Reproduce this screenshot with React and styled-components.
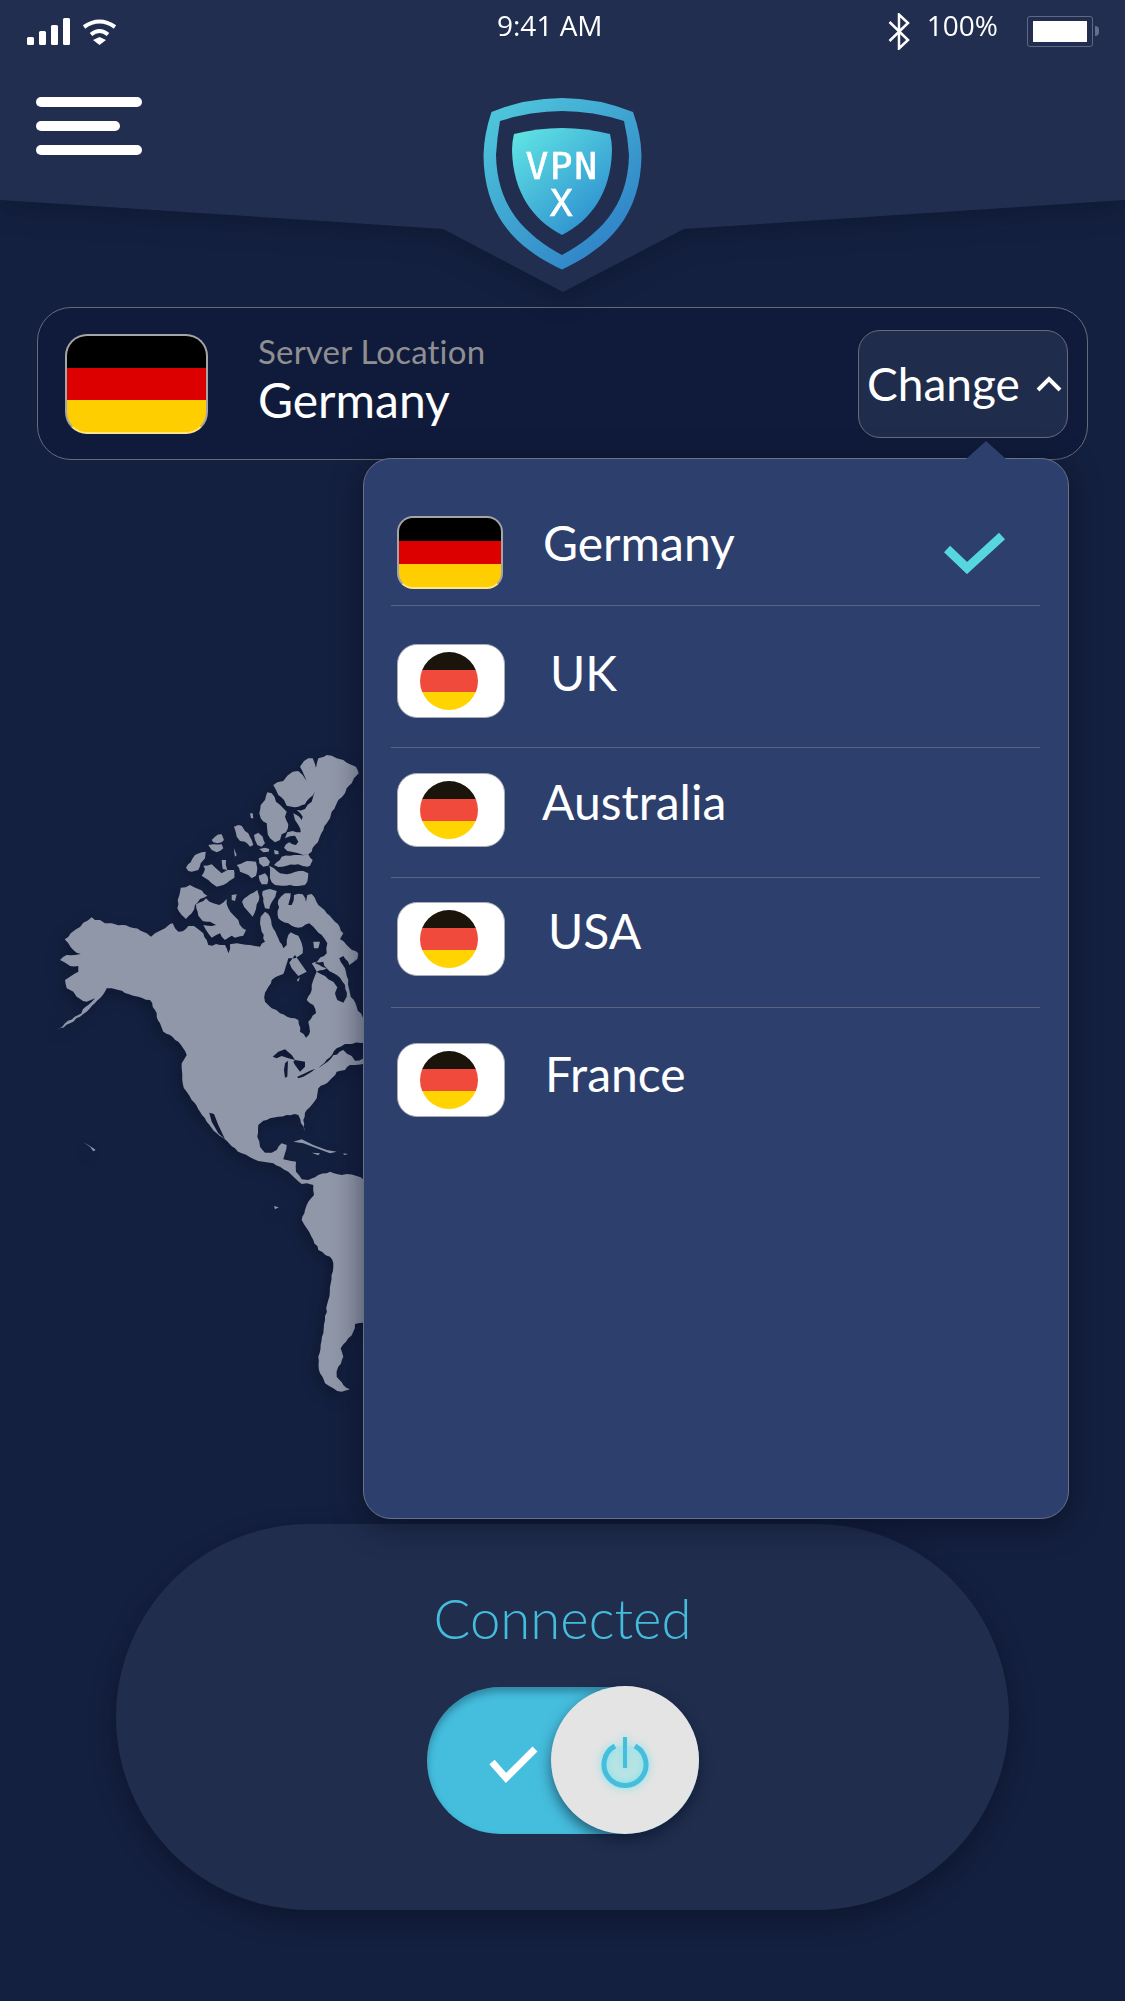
import React from 'react'
import styled, { createGlobalStyle } from 'styled-components'

const GlobalStyle = createGlobalStyle`
    html, body {
        margin: 0;
        padding: 0;
        background: #14203f;
    }
    * {
        box-sizing: border-box;
    }
`

// map tracing, done in three crops of the screenshot. each crop has its own origin
const Z7 = [170, 745]
const Z8 = [50, 900]
const Z9 = [170, 1100]

const seg = (origin, text) =>
    text.trim().split(/\s+/).map((p) => {
        const [x, y] = p.split(',').map(Number)
        return [origin[0] + x / 3, origin[1] + y / 3]
    })

// the tracing is too straight for a coastline, so break each long edge up a little
const rough = (points, amount) => {
    const out = []
    points.forEach((p, i) => {
        const q = points[(i + 1) % points.length]
        const dx = q[0] - p[0]
        const dy = q[1] - p[1]
        const len = Math.hypot(dx, dy)
        const steps = Math.min(6, Math.floor(len / 3.5))
        out.push(p)
        for (let s = 1; s < steps; s++) {
            const t = s / steps
            const wobble = Math.sin((p[0] + s) * 12.9898 + (p[1] + s) * 78.233) * 43758.5453
            const d = (wobble - Math.floor(wobble) - 0.5) * amount * 2
            out.push([p[0] + dx * t - (dy / len) * d, p[1] + dy * t + (dx / len) * d])
        }
    })
    return out
}

const shape = (points) =>
    'M' + points.map((p) => p[0].toFixed(1) + ' ' + p[1].toFixed(1)).join('L') + 'Z'

const mainland = [
    ...seg(Z8, `44,118 62,100 78,88 100,68 125,52 135,60 150,60 165,70 185,70 205,76 228,76 250,84 272,92 290,100
        303,110 315,100 330,92 345,85 360,72 368,70 375,85 385,95 398,94 415,78 432,78 445,88 460,100 470,120 475,135`),
    ...seg(Z7, `115,600 150,600 165,600 175,625 180,598 200,595 240,600 270,605 285,590 275,560 270,535 272,515
        285,500 300,515 305,540 325,580 340,610 350,600 355,570 362,562 385,572 395,595 398,625 375,640 355,640 345,665`),
    ...seg(Z8, `712,190 700,222 665,240 645,278 645,305 665,325 690,340 745,360 750,395 768,413 780,395 775,365
        798,340 790,315 770,300 785,270 790,240 800,215 825,228 850,245 862,262 855,280 862,300 880,308 890,290
        885,255 860,225 830,205 795,190 830,160 832,130 815,105 790,80 778,70`),
    ...seg(Z7, `385,548 355,535 325,520 325,465 345,445 362,445 355,480 365,480 372,450 398,448 408,470 412,450 425,447
        445,480 470,505 495,530 520,565 510,582 530,600 565,625 555,650`),
    ...seg(Z8, `925,165 912,185 898,195 880,168 868,175 885,205 895,240 900,280 920,320 938,352 990,352 990,425
        905,432 885,432 860,445 840,472 805,505 815,497 850,466 880,450 905,468 915,482 990,470 990,482 900,495
        885,510 860,515 840,540 805,565 800,595 770,630 760,660`),
    ...seg(Z9, `405,95 393,70 385,45 350,45 325,50 300,55 280,62 265,75 262,110 270,140 285,158 305,158 320,150
        335,130 350,135 345,160 340,178 360,182 378,185 378,215 395,238 415,240 435,232 445,225 470,220 480,215
        500,222 530,222 560,228 582,240 640,240 640,668 582,668 555,672 550,695 535,715 512,745 520,770 505,800
        500,830 520,855 540,868 515,875 490,865 465,850 450,820 445,770 460,700 465,660 475,600 482,550 490,490
        480,470 445,450 430,420 410,385 395,360 405,330 415,305 432,285 430,255 410,250 395,252 375,235 355,215
        330,200 310,190 280,185 265,183 240,172 215,160 195,145 170,122 140,100 110,65 90,35 65,0`),
    ...seg(Z8, `410,575 398,550 395,490 410,465 385,425 360,405 340,395 330,370 315,330 300,300 265,290 235,282
        205,270 185,265 170,265 150,295 120,325 90,350 60,370 20,392 45,370 85,345 115,315 135,295 110,305 80,290
        70,275 50,265 45,240 60,230 85,215 85,198 60,198 30,180 50,165 75,165 92,162 70,150 55,130`),
]

const arctic = [
    `310,120 322,112 340,108 352,92 368,80 385,78 398,90 410,108 400,85 390,65 402,48 415,40 428,40 438,68 445,40
     462,35 470,30 485,32 500,40 520,45 540,58 558,65 566,85 552,100 545,115 530,130 525,145 505,165 498,180 485,200
     480,220 470,235 460,255 448,280 435,300 425,320 415,328 400,330 385,325 365,320 352,318 342,308 348,298 358,292
     378,300 385,290 375,272 345,280 352,262 368,258 392,262 385,240 375,225 370,205 395,225 398,215 380,195 405,192
     425,170 435,140 418,160 405,178 385,185 350,182 342,165 325,150 318,135`,
    `272,180 285,165 292,142 305,145 318,170 340,190 350,200 345,215 355,238 348,262 335,268 330,285 315,292 300,280
     292,255 290,235 272,220 268,205`,
    `240,205 248,205 250,220 243,220`,
    `192,245 205,240 215,242 225,258 235,265 245,285 250,300 240,305 225,290 210,288 200,275`,
    `252,270 265,263 278,275 285,295 275,305 262,300 255,285`,
    `268,312 285,308 298,312 296,320 280,322`,
    `312,315 325,318 326,328 314,328`,
    `125,285 135,275 155,268 162,285 155,292 130,292`,
    `115,300 130,298 155,298 160,310 140,322 125,315`,
    `48,368 62,352 75,330 95,322 107,320 105,340 92,355 85,375 65,380 55,378`,
    `95,392 105,372 100,362 125,358 140,372 155,385 172,375 192,375 193,398 178,408 160,420 140,425 125,415 115,405`,
    `155,345 168,345 172,375 158,372`,
    `192,310 200,330 195,335`,
    `200,360 225,350 232,348 258,350 262,370 258,392 245,400 235,390 222,385 210,380`,
    `266,340 288,335 300,350 295,362 280,365 268,355`,
    `320,352 335,335 360,332 385,330 415,328 428,345 420,362 412,365 385,358 350,362 325,366 312,360`,
    `298,362 312,370 330,385 350,388 400,378 415,385 412,410 405,420 385,423 360,420 335,422 315,420 305,412 300,385`,
    `266,392 285,385 295,405 292,418 275,418`,
    `278,438 300,432 320,438 316,455 305,472 298,492 285,490 280,470`,
    `240,448 262,435 268,455 260,478 258,492 248,515 235,500 222,485 216,470`,
    `78,478 90,472 108,460 130,475 148,480 170,462 175,490 190,510 205,525 218,550 228,555 220,572 195,578 185,572
     165,585 150,565 125,578 108,555 100,540 138,540 120,530 98,528 85,512`,
    `32,428 60,420 85,432 112,452 90,462 75,480 65,505 48,522 35,510 22,490`,
    `185,450 200,448 195,468 185,465`,
    `430,590 450,590 445,610 432,610`,
    `425,655 460,650 470,670 440,680`,
].map((text) => seg(Z7, text))

const others = [
    // southampton and a bit of hudson bay
    seg(Z8, `718,188 735,165 770,215 745,228 725,205`),
    seg(Z8, `740,240 750,232 745,245`),
    // great lakes
    seg(Z8, `668,470 685,455 705,448 725,465 735,480 715,475 695,468 680,475`),
    seg(Z8, `705,490 714,482 712,530 705,533 702,510`),
    seg(Z8, `735,480 765,485 765,500 750,515 735,495 730,485`),
    seg(Z8, `742,530 765,520 780,512 795,507 785,515 760,530 745,535`),
    // gulf of california
    seg(Z9, `118,38 132,42 145,75 165,118 145,100 125,65`),
    // caribbean, hawaii, galapagos
    seg(Z9, `370,125 395,118 430,135 470,150 500,155 480,160 440,145 400,130`),
    seg(Z9, `425,158 450,160 445,166`),
    seg(Z9, `520,160 535,162 522,165`),
    seg(Z8, `100,727 115,735 130,745 137,750 130,754 120,740`),
    seg(Z9, `312,318 326,322 315,328`),
]

const mapPath =
    shape(rough(mainland, 1)) +
    arctic.map((a) => shape(rough(a, 1))).join('') +
    others.map(shape).join('')

const countries = [
    { name: 'UK', top: 38, bottom: 29, indent: 45, lift: 17 },
    { name: 'Australia', top: 25, bottom: 30, indent: 37, lift: 17 },
    { name: 'USA', top: 24, bottom: 31, indent: 43, lift: 17 },
    { name: 'France', top: 35, bottom: 0, indent: 40, lift: 13, last: true },
]

function App() {
    return (
        <Screen>
            <GlobalStyle />
            <HeaderShadow>
                <Header>
                    <StatusBar>
                        <StatusLeft>
                            <Signal>
                                <SignalBar $h={8} />
                                <SignalBar $h={14} />
                                <SignalBar $h={20} />
                                <SignalBar $h={27} />
                            </Signal>
                            <svg width="35" height="27" viewBox="0 0 35 27">
                                <path d="M2 9Q17.5-2 33 9M9 16.500Q17.500 9.500 26 16.500" fill="none" stroke="#fff" strokeWidth="4" />
                                <path d="M11 22L17.500 19 24 22 17.500 27Z" fill="#fff" />
                            </svg>
                        </StatusLeft>
                        <StatusText>9:41 AM</StatusText>
                        <StatusRight>
                            <svg width="22" height="37" viewBox="0 0 22 37">
                                <path d="M1.500 9L20 27 11 35.500V1.500L20 10 1.500 28" fill="none" stroke="#fff" strokeWidth="2.500" />
                            </svg>
                            <StatusText>100%</StatusText>
                            <Battery>
                                <BatteryFill />
                            </Battery>
                        </StatusRight>
                    </StatusBar>
                    <NavRow>
                        <Hamburger>
                            <HamburgerLine />
                            <HamburgerLine $short />
                            <HamburgerLine />
                        </Hamburger>
                        <LogoWrap>
                            <svg width="159" height="172" viewBox="0 0 159 172">
                                <defs>
                                    <linearGradient id="ring" x1="0.1" y1="0" x2="0.85" y2="0.9">
                                        <stop offset="0" stopColor="#50c8dc" />
                                        <stop offset="1" stopColor="#2e80c6" />
                                    </linearGradient>
                                    <linearGradient id="core" x1="0.1" y1="0" x2="0.85" y2="0.9">
                                        <stop offset="0" stopColor="#5fe3e3" />
                                        <stop offset="1" stopColor="#2e8fd0" />
                                    </linearGradient>
                                </defs>
                                <path
                                    fillRule="evenodd"
                                    fill="url(#ring)"
                                    d="M8.500 14Q43 0 79 0T150 14Q158 36 158.500 57C158 118 125 150 79 171.500C33 150 1 118 0.500 57Q1 36 8.500 14Z
                                       M17 23Q48 13 79 13T141 23Q145 40 146 57C145 110 115 137 79 157C43 137 14 110 13 57Q14 40 17 23Z"
                                />
                                <path
                                    fill="url(#core)"
                                    d="M31 36Q55 30 79 30T127 36Q129 44 129 52C128 95 108 122 79 137C50 122 30 95 29 52Q29 44 31 36Z"
                                />
                                <LogoText>
                                    <tspan x="79" y="81">VPN</tspan>
                                    <tspan x="79" y="118">X</tspan>
                                </LogoText>
                            </svg>
                        </LogoWrap>
                    </NavRow>
                </Header>
            </HeaderShadow>

            <LocationCard>
                <SquareFlag $w={143} $h={100} $radius={22} />
                <LocationText>
                    <LocationLabel>Server Location</LocationLabel>
                    <LocationName>Germany</LocationName>
                </LocationText>
                <ChangeButton>
                    Change
                    <svg width="26" height="16" viewBox="0 0 26 16">
                        <path d="M2 14L13 3 24 14" fill="none" stroke="#fff" strokeWidth="4" />
                    </svg>
                </ChangeButton>
            </LocationCard>

            <Body>
                <MapWrap>
                    <svg width="340" height="670" viewBox="40 740 340 670">
                        <path d={mapPath} fill="#9097a9" fillRule="evenodd" />
                    </svg>
                </MapWrap>

                <Dropdown>
                    <Row $top={57} $bottom={16}>
                        <SquareFlag $w={106} $h={73} $radius={16} />
                        <RowLabel $indent={40} $lift={19}>Germany</RowLabel>
                        <RowCheck width="62" height="42" viewBox="0 0 62 42">
                            <path d="M3 17L23 36 58 4" fill="none" stroke="#56d6e0" strokeWidth="9" />
                        </RowCheck>
                    </Row>
                    {countries.map((c) => (
                        <Row key={c.name} $top={c.top} $bottom={c.bottom} $last={c.last}>
                            <Tile>
                                <RoundFlag />
                            </Tile>
                            <RowLabel $indent={c.indent} $lift={c.lift}>{c.name}</RowLabel>
                        </Row>
                    ))}
                </Dropdown>

                <StatusPill>
                    <Connected>Connected</Connected>
                    <Toggle>
                        <ToggleCheck width="52" height="40" viewBox="0 0 52 40">
                            <path d="M4 17L18 33 47 4" fill="none" stroke="#fff" strokeWidth="7" />
                        </ToggleCheck>
                        <Knob>
                            <PowerIcon width="50" height="54" viewBox="0 0 50 54">
                                <path d="M15 11A21 21 0 1 0 35 11" fill="rgba(95,225,230,.18)" stroke="#45bddd" strokeWidth="5" />
                                <path d="M25 2V33" fill="none" stroke="#45bddd" strokeWidth="4" />
                            </PowerIcon>
                        </Knob>
                    </Toggle>
                </StatusPill>
            </Body>
        </Screen>
    )
}

export default App

const Screen = styled.div`
    width: 1125px;
    height: 2001px;
    overflow: hidden;
    background: #14203f;
    font-family: Lato, "Open Sans", sans-serif;
    color: #fff;
`
const HeaderShadow = styled.div`
    filter: drop-shadow(0 5px 14px rgba(6, 12, 32, 0.4));
`
const Header = styled.header`
    height: 292px;
    background: #212e4f;
    clip-path: polygon(0 0, 100% 0, 100% 200px, 684px 229px, 563px 292px, 443px 229px, 0 200px);
`
const StatusBar = styled.div`
    height: 62px;
    padding: 0 27px;
    display: grid;
    grid-template-columns: 470px auto 1fr;
    align-items: center;
`
const StatusLeft = styled.div`
    display: flex;
    align-items: flex-end;
    gap: 12px;
    height: 28px;
`
const Signal = styled.div`
    display: flex;
    align-items: flex-end;
    gap: 5px;
`
const SignalBar = styled.span`
    width: 7px;
    height: ${(p) => p.$h}px;
    background: #fff;
    border-radius: 1.5px;
`
const StatusText = styled.span`
    font-family: "Open Sans", sans-serif;
    font-size: 28px;
    font-weight: 400;
    line-height: 34px;
    margin-top: -12px;
    white-space: nowrap;
`
const StatusRight = styled.div`
    display: flex;
    align-items: center;
    justify-content: flex-end;
    gap: 17px;
`
const Battery = styled.div`
    position: relative;
    width: 66px;
    height: 31px;
    margin-left: 12px;
    margin-right: 5px;
    padding: 4px 5px;
    border: 1.5px solid #5f6a82;
    border-radius: 3px;
    &::after {
        content: '';
        position: absolute;
        top: 9px;
        right: -7px;
        width: 4px;
        height: 10px;
        border-radius: 0 4px 4px 0;
        background: #666f88;
    }
`
const BatteryFill = styled.div`
    height: 100%;
    background: #fff;
`
const NavRow = styled.div`
    padding: 35px 36px 0;
    display: grid;
    grid-template-columns: 106px 1fr 106px;
    align-items: start;
`
const Hamburger = styled.div`
    display: flex;
    flex-direction: column;
    gap: 14px;
`
const HamburgerLine = styled.span`
    display: block;
    height: 10px;
    width: ${(p) => (p.$short ? '84px' : '106px')};
    background: #fff;
    border-radius: 5px;
`
const LogoWrap = styled.div`
    display: flex;
    justify-content: center;
    padding-top: 1px;
    svg {
        display: block;
    }
`
const LogoText = styled.text`
    font-family: "DejaVu Sans Mono", monospace;
    font-size: 38px;
    text-anchor: middle;
    letter-spacing: 1.5px;
    fill: #fff;
    stroke: #fff;
    stroke-width: 0.6px;
`
const LocationCard = styled.section`
    height: 153px;
    margin: 15px 37px 0;
    padding: 0 19px 0 27px;
    display: flex;
    align-items: center;
    background: #101b3b;
    border: 1px solid #666b78;
    border-radius: 34px;
`
const SquareFlag = styled.div`
    flex: none;
    width: ${(p) => p.$w}px;
    height: ${(p) => p.$h}px;
    border-radius: ${(p) => p.$radius}px;
    border: 2px solid #a5a5a5;
    border-bottom-color: #ffe58a;
    background: linear-gradient(#000 0 33%, #dd0000 33% 67%, #ffce00 67%);
`
const LocationText = styled.div`
    margin-left: 50px;
    display: flex;
    flex-direction: column;
`
const LocationLabel = styled.span`
    font-size: 33px;
    line-height: 36px;
    letter-spacing: 0.2px;
    color: #8f8f92;
    margin-top: -8px;
`
const LocationName = styled.span`
    font-size: 48px;
    line-height: 54px;
    margin-top: 4px;
`
const ChangeButton = styled.button`
    margin-left: auto;
    width: 210px;
    height: 108px;
    padding: 0 5px 0 8px;
    display: flex;
    align-items: center;
    justify-content: space-between;
    background: #1f2c4c;
    border: 1px solid #666b78;
    border-radius: 22px;
    color: #fff;
    font-family: inherit;
    font-size: 46px;
`
const Body = styled.main`
    position: relative;
    padding-top: 280px;
`
const MapWrap = styled.div`
    height: 670px;
    margin-left: 40px;
    svg {
        display: block;
        filter: drop-shadow(-4px 5px 7px rgba(6, 12, 32, 0.4));
    }
`
const Dropdown = styled.div`
    position: absolute;
    z-index: 2;
    top: -2px;
    right: 56px;
    width: 706px;
    height: 1061px;
    padding: 0 28px 0 27px;
    background: #2d3f6d;
    border: 1px solid #6a7186;
    border-radius: 28px;
    box-shadow: 0 6px 30px rgba(6, 10, 28, 0.55);
    &::before {
        content: '';
        position: absolute;
        top: -18px;
        left: 602px;
        width: 40px;
        height: 18px;
        background: #2d3f6d;
        clip-path: polygon(50% 0, 100% 100%, 0 100%);
    }
`
const Row = styled.div`
    display: flex;
    align-items: center;
    padding: ${(p) => p.$top}px 0 ${(p) => p.$bottom}px 6px;
    border-bottom: ${(p) => (p.$last ? 'none' : '1px solid #5a6380')};
`
const RowLabel = styled.span`
    margin-left: ${(p) => p.$indent}px;
    padding-bottom: ${(p) => p.$lift}px;
    font-size: 48px;
    line-height: 54px;
`
const RowCheck = styled.svg`
    margin-left: auto;
    margin-right: 34px;
    flex: none;
`
const Tile = styled.div`
    flex: none;
    width: 108px;
    height: 74px;
    padding-right: 4px;
    display: flex;
    align-items: center;
    justify-content: center;
    background: #fff;
    border: 1px solid #a9acb5;
    border-radius: 20px;
`
const RoundFlag = styled.div`
    width: 58px;
    height: 58px;
    border-radius: 50%;
    background: linear-gradient(#1a140a 0 31%, #ef4a3c 31% 69%, #ffd400 69%);
`
const StatusPill = styled.section`
    height: 386px;
    margin: 114px 116px 0;
    padding-top: 61px;
    display: flex;
    flex-direction: column;
    align-items: center;
    background: #202d4d;
    border-radius: 193px;
    box-shadow: 0 10px 26px rgba(6, 10, 28, 0.45);
`
const Connected = styled.div`
    font-size: 54.5px;
    font-weight: 300;
    line-height: 66px;
    color: #45bcdc;
`
const Toggle = styled.div`
    position: relative;
    width: 272px;
    height: 147px;
    margin-top: 36px;
    display: flex;
    align-items: center;
    padding-left: 61px;
    background: #45bddd;
    border-radius: 74px;
    box-shadow: inset 0 5px 7px rgba(10, 40, 60, 0.35);
`
const ToggleCheck = styled.svg`
    flex: none;
    margin-top: 8px;
`
const Knob = styled.div`
    position: absolute;
    top: -1px;
    right: 0;
    width: 148px;
    height: 148px;
    display: flex;
    align-items: center;
    justify-content: center;
    background: #e4e4e4;
    border-radius: 50%;
    box-shadow: 0 6px 13px rgba(6, 14, 36, 0.55);
`
const PowerIcon = styled.svg`
    margin-top: 4px;
    filter: drop-shadow(0 0 4px rgba(90, 225, 235, 0.8));
`
